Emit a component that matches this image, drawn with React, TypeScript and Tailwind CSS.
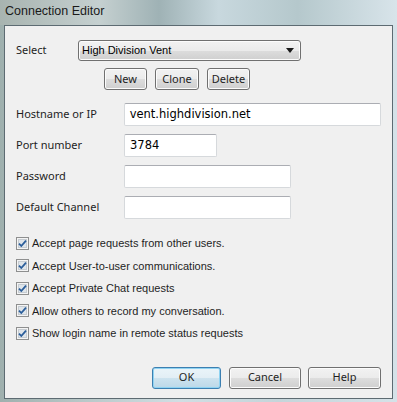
import React from 'react';

const labelFont = { fontFamily: '"Noto Sans", "Open Sans", sans-serif' };

function Check({ label }: { label: string }) {
  return (
    <label className="flex items-center h-[22.5px] gap-[3px]">
      <svg width="13" height="13" viewBox="0 0 13 13" className="shrink-0">
        <rect x="0.5" y="0.5" width="12" height="12" fill="#f4f4f4" stroke="#8e8f8f" />
        <rect x="2.5" y="2.5" width="8" height="8" fill="#dfe5ea" stroke="#c6ccd2" />
        <path d="M3 6.6 L5.3 9 L10 3.6" fill="none" stroke="#2a5d9a" strokeWidth="1.8" />
      </svg>
      <span className="text-[11px] text-[#1e1e1e]" style={{ fontFamily: '"Liberation Sans", sans-serif' }}>
        {label}
      </span>
    </label>
  );
}

function Btn({ children, w, primary }: { children: React.ReactNode; w: string; primary?: boolean }) {
  return (
    <button
      className={`${w} h-[22px] rounded-[3px] border text-[11px] text-[#1e1e1e] ${
        primary
          ? 'border-[#3c7fb1] shadow-[inset_0_0_0_1px_#8fd3f2] bg-[linear-gradient(#eaf4f9_0%,#e2eef5_50%,#cde3ef_50%,#bcd8e8_100%)]'
          : 'border-[#707070] shadow-[inset_0_0_0_1px_#fcfcfc] bg-[linear-gradient(#f2f2f2_0%,#ebebeb_50%,#dddddd_50%,#cfcfcf_100%)]'
      }`}
      style={labelFont}
    >
      {children}
    </button>
  );
}

function Field({ label, value, w }: { label: string; value?: string; w: string }) {
  return (
    <div className="flex items-center h-[31px]">
      <span className="w-[108px] text-[11px] text-[#1e1e1e]" style={labelFont}>
        {label}
      </span>
      <div
        className={`${w} h-[23px] bg-white border border-[#d6d9dc] border-t-[#abadb3] rounded-[2px] flex items-center px-[5px] text-black`}
        style={{ fontFamily: '"DejaVu Sans", sans-serif', fontSize: '11.5px' }}
      >
        {value}
      </div>
    </div>
  );
}

export default function App() {
  return (
    <div className="w-[397px] h-[402px] flex flex-col bg-[linear-gradient(90deg,#9fb0ae_0%,#b8c7c7_20%,#d0dee3_45%,#c5d5da_70%,#d5e2e8_100%)] overflow-hidden">
      <div className="h-[25px] shrink-0 pl-[5px] flex items-center bg-[linear-gradient(90deg,#a8b4b0_0%,#c5d0d0_25%,#9fb2b5_40%,#c8d8de_55%,#b5c8cc_75%,#d8e4ea_100%)]">
        <span className="text-[12.5px] text-[#1a1a1a] mt-[-3px]" style={{ fontFamily: '"Liberation Sans", sans-serif' }}>
          Connection Editor
        </span>
      </div>
      <div className="flex-1 ml-[4px] mr-[4px] mb-[3px] bg-[linear-gradient(180deg,#a6b8bc,#b9cc98)]">
        <div className="h-full border border-[#5d6b72] bg-[#f0f0f0] pl-[11px] pr-[11px] pt-[13px]">
          <div className="flex items-center h-[22px]">
            <span className="w-[62px] text-[11px] text-[#1e1e1e]" style={labelFont}>
              Select
            </span>
            <div className="w-[223px] h-[21px] rounded-[3px] border border-[#707070] shadow-[inset_0_0_0_1px_#fcfcfc] bg-[linear-gradient(#f2f2f2_0%,#ebebeb_50%,#dddddd_50%,#cfcfcf_100%)] flex items-center justify-between pl-[3px] pr-[6px]">
              <span className="text-[11px] text-black" style={{ fontFamily: '"Liberation Sans", sans-serif' }}>
                High Division Vent
              </span>
              <svg width="8" height="5" viewBox="0 0 8 5">
                <path d="M0 0 H8 L4 5 Z" fill="#1a1a1a" />
              </svg>
            </div>
          </div>
          <div className="flex gap-[8px] ml-[88px] mt-[7px]">
            <Btn w="w-[43px]">New</Btn>
            <Btn w="w-[44px]">Clone</Btn>
            <Btn w="w-[43px]">Delete</Btn>
          </div>
          <div className="mt-[9px] flex flex-col">
            <Field label="Hostname or IP" value="vent.highdivision.net" w="w-[258px]" />
            <Field label="Port number" value="3784" w="w-[93px]" />
            <Field label="Password" w="w-[167px]" />
            <Field label="Default Channel" w="w-[167px]" />
          </div>
          <div className="mt-[9px] flex flex-col">
            <Check label="Accept page requests from other users." />
            <Check label="Accept User-to-user communications." />
            <Check label="Accept Private Chat requests" />
            <Check label="Allow others to record my conversation." />
            <Check label="Show login name in remote status requests" />
          </div>
          <div className="flex justify-end mt-[22px]">
            <Btn w="w-[69px]" primary>
              OK
            </Btn>
            <div className="w-[8px]" />
            <Btn w="w-[72px]">Cancel</Btn>
            <div className="w-[7px]" />
            <Btn w="w-[73px]">Help</Btn>
          </div>
        </div>
      </div>
    </div>
  );
}
